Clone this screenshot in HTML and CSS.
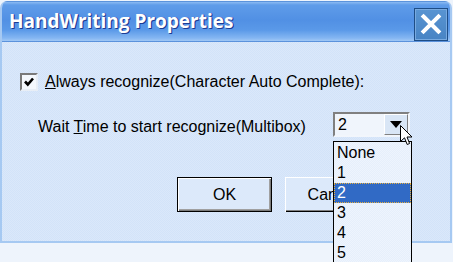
FILE: index.html
```html
<!DOCTYPE html>
<html lang="en">
<head>
    <meta charset="UTF-8">
    <title>HandWriting Properties</title>
    <link rel="stylesheet" href="styles.css">
</head>
<body>
    <div class="window">
        <div class="titlebar">
            <span class="title">HandWriting Properties</span>
            <button class="close-btn">
                <svg width="22" height="22" viewBox="0 0 22 22">
                    <path d="M3.5 3.5 L18.5 18.5 M18.5 3.5 L3.5 18.5" stroke="#fff" stroke-width="4" stroke-linecap="square"/>
                </svg>
            </button>
        </div>
        <div class="client">
            <label class="check-row">
                <span class="checkbox">
                    <svg width="14" height="14" viewBox="0 0 14 14">
                        <polyline points="3,6.5 5.8,9.5 11,3.5" fill="none" stroke="#000" stroke-width="2.6"/>
                    </svg>
                </span>
                <span><u>A</u>lways recognize(Character Auto Complete):</span>
            </label>
            <div class="wait-row">
                <span class="wait-label">Wait <u>T</u>ime to start recognize(Multibox)</span>
                <div class="combo">
                    <span class="combo-value">2</span>
                    <span class="combo-btn">
                        <svg width="12" height="7" viewBox="0 0 12 7"><polygon points="0,0 12,0 6,7" fill="#000"/></svg>
                    </span>
                </div>
            </div>
            <div class="buttons">
                <button class="btn btn-default">OK</button>
                <button class="btn">Cancel</button>
            </div>
        </div>
    </div>

    <ul class="droplist">
        <li>None</li>
        <li>1</li>
        <li class="selected">2</li>
        <li>3</li>
        <li>4</li>
        <li>5</li>
    </ul>

    <svg class="cursor" width="13" height="21" viewBox="0 0 13 21">
        <path d="M0.5 0.5 L0.5 16.5 L4.5 12.8 L7.2 19.5 L9.6 18.5 L7 12 L12 12 Z" fill="#fff" stroke="#000" stroke-width="1"/>
    </svg>
</body>
</html>
```

FILE: styles.css
```css
body {
    margin: 0;
    width: 453px;
    height: 262px;
    overflow: hidden;
    background-color: #eef4fc;
    font-family: "Liberation Sans", Arial, sans-serif;
    font-size: 16px;
    color: #000;
    position: relative;
}
.window {
    width: 452px;
    height: 242px;
    margin-top: 1px;
    box-sizing: border-box;
    border-left: 2px solid #a6c9f2;
    border-right: 2px solid #a6c9f2;
    border-bottom: 2px solid #a6c9f2;
    border-radius: 7px 7px 0 0;
    background: repeating-conic-gradient(#d2e3f9 0 25%, #dbe8fa 0 50%) 0 0 / 2px 2px;
    overflow: hidden;
}
.titlebar {
    height: 41px;
    box-sizing: border-box;
    display: flex;
    align-items: center;
    justify-content: space-between;
    padding: 0 2px 0 7px;
    border-top: 1px solid #5b93dc;
    border-bottom: 1px solid #5b92dc;
    background: linear-gradient(#8bbaf2 0, #5f9ce9 3px, #5190e4 18px, #5a99e8 28px, #84b6f2 36px, #a9cdf6 40px);
}
.title {
    font-family: "Open Sans", "DejaVu Sans", sans-serif;
    font-weight: 700;
    font-size: 19px;
    color: #fff;
    text-shadow: 1px 1px 0 #1c3c94, 1px 0 0 #3a4fb0;
    margin-top: -1px;
}
.close-btn {
    width: 34px;
    height: 33px;
    margin-top: 5px;
    padding: 0;
    display: flex;
    align-items: center;
    justify-content: center;
    border: 1px solid #1e4d86;
    box-shadow: inset 0 0 0 1px #78aae0;
    background: linear-gradient(#5894d2, #4884c4);
}
.client {
    padding-top: 31px;
}
.check-row {
    display: flex;
    align-items: center;
    gap: 7px;
    height: 18px;
    padding-left: 18px;
}
.checkbox {
    width: 18px;
    height: 18px;
    box-sizing: border-box;
    display: flex;
    align-items: center;
    justify-content: center;
    border-top: 2px solid #7a7a7a;
    border-left: 2px solid #7a7a7a;
    border-right: 2px solid #e8eef6;
    border-bottom: 2px solid #e8eef6;
    background-color: #f4f8fd;
}
.wait-row {
    display: flex;
    align-items: center;
    margin-top: 21px;
    padding-left: 36px;
    height: 25px;
}
.wait-label {
    width: 295px;
    flex: none;
    padding-top: 4px;
}
.combo {
    width: 77px;
    height: 25px;
    box-sizing: border-box;
    display: flex;
    justify-content: space-between;
    border-top: 2px solid #808080;
    border-left: 2px solid #808080;
    border-right: 2px solid #f2f6fc;
    border-bottom: 2px solid #f2f6fc;
    background-color: #f0f5fc;
}
.combo-value {
    padding-left: 3px;
    line-height: 21px;
}
.combo-btn {
    width: 24px;
    box-sizing: border-box;
    display: flex;
    align-items: center;
    justify-content: center;
    border-top: 1px solid #fff;
    border-left: 1px solid #fff;
    border-right: 1px solid #808080;
    border-bottom: 1px solid #808080;
    background-color: #d9e6f6;
}
.buttons {
    display: flex;
    gap: 13px;
    margin-top: 40px;
    padding-left: 175px;
}
.btn {
    width: 95px;
    height: 35px;
    box-sizing: border-box;
    font-family: "Liberation Sans", Arial, sans-serif;
    font-size: 16px;
    color: #000;
    border: none;
    background-color: #dce9fa;
    box-shadow: inset 1px 1px 0 #fff, inset -1px -1px 0 #000, inset -2px -2px 0 #808080;
}
.btn-default {
    border: 1px solid #000;
    box-shadow: inset 1px 1px 0 #fff, inset -1px -1px 0 #7a7a7a, inset -2px -2px 0 #a0a0a0;
}
.droplist {
    position: absolute;
    left: 333px;
    top: 141px;
    width: 79px;
    height: 130px;
    box-sizing: border-box;
    margin: 0;
    padding: 1px 0 0;
    list-style: none;
    border: 1px solid #000;
    background: repeating-conic-gradient(#e6effb 0 25%, #eef4fd 0 50%) 0 0 / 2px 2px;
}
.droplist li {
    height: 20px;
    line-height: 20px;
    padding-left: 3px;
    box-sizing: border-box;
}
.droplist li.selected {
    background-color: #316ac5;
    color: #fff;
    outline: 1px dotted #e8b040;
    outline-offset: -1px;
}
.cursor {
    position: absolute;
    left: 400px;
    top: 125px;
}
```
